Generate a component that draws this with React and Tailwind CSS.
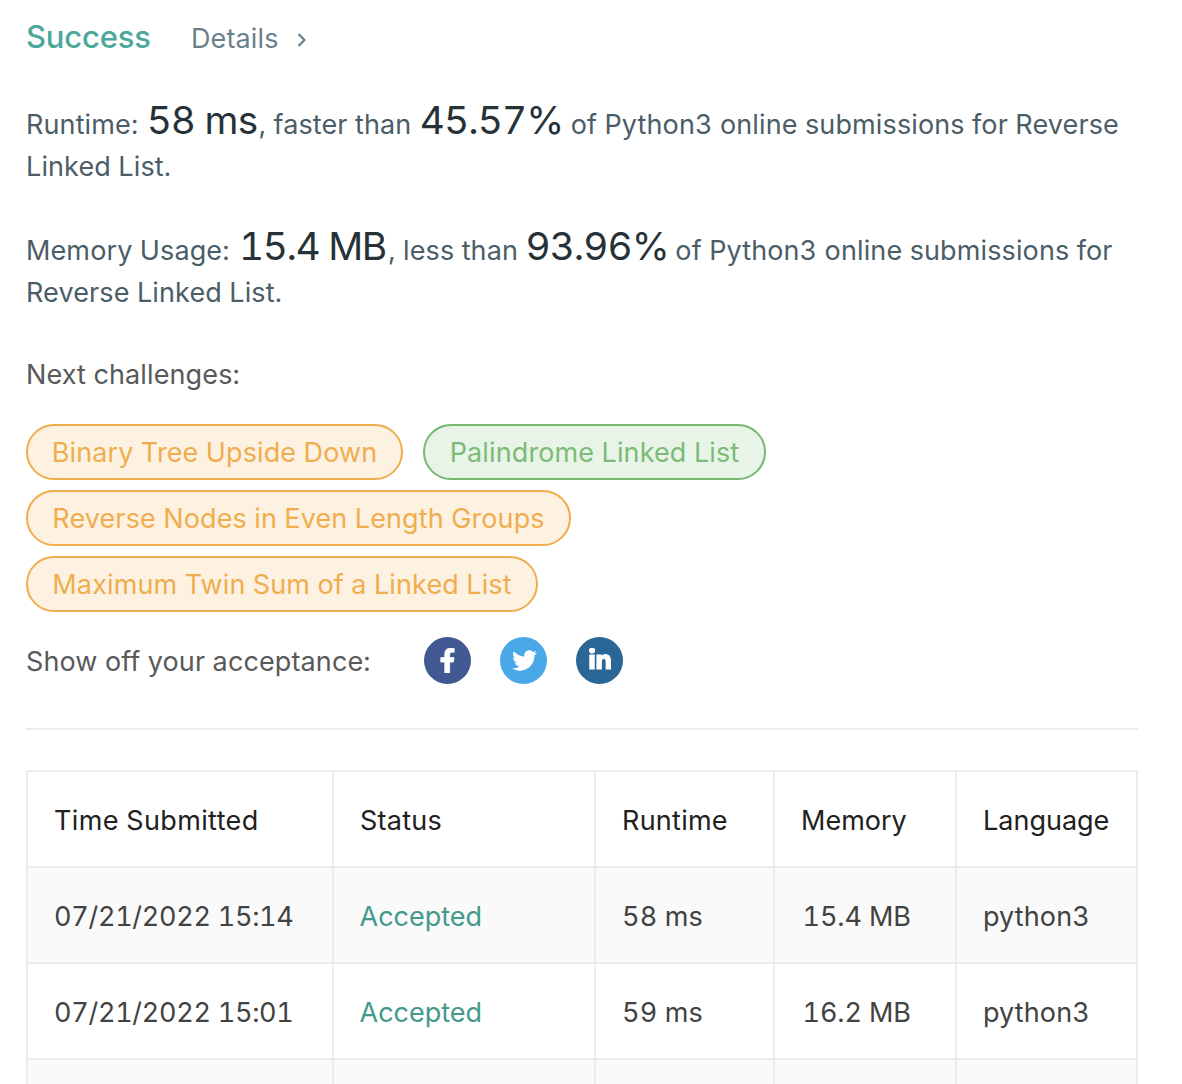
import { FaFacebookF, FaTwitter, FaLinkedinIn } from 'react-icons/fa';

const submissions = [
  { time: '07/21/2022 15:14', runtime: '58 ms', memory: '15.4 MB' },
  { time: '07/21/2022 15:01', runtime: '59 ms', memory: '16.2 MB' },
  { time: '', runtime: '', memory: '' },
];

const columns = [
  { label: 'Time Submitted', width: 'w-[306px] tracking-[0.35px]' },
  { label: 'Status', width: 'w-[262px] tracking-[0.25px]' },
  { label: 'Runtime', width: 'w-[179px] tracking-[0.25px]' },
  { label: 'Memory', width: 'w-[182px] tracking-[0px]' },
  { label: 'Language', width: 'w-[181px] tracking-[0px]' },
];

function Figure({ children, className }) {
  return (
    <span className={`text-[38.75px] leading-none text-[#263238] ${className}`}>{children}</span>
  );
}

function Challenge({ children, className }) {
  return (
    <a className={`flex h-14 items-center justify-center rounded-full border-2 pt-0.5 whitespace-nowrap ${className}`}>
      {children}
    </a>
  );
}

function Cell({ children, className = 'pl-[26px]' }) {
  return (
    <td className={`h-24 border-r-2 border-b-2 border-[#ececec] pt-1 whitespace-nowrap ${className}`}>
      {children}
    </td>
  );
}

const medium = 'border-[#f0ad4e] bg-[#fdf2e2] text-[#f0ad4e]';
const easy = 'border-[#77b971] bg-[#e9f4e9] text-[#7cbb76]';

export default function App() {
  return (
    <main className="h-[1084px] overflow-hidden bg-white pr-11 pl-[26px] font-['Inter',sans-serif] text-[27px] leading-[42px] tracking-[0.12px] text-[#546e7a] tabular-nums">
      <header className="flex items-baseline pt-4">
        <h1 className="w-[165px] text-[31px] font-medium tracking-[-0.2px] text-[#4da79b]">Success</h1>
        <a className="flex items-center text-[#6b7f8b]">
          Details
          <svg className="mt-0.5 ml-[18.5px]" width="9" height="14" viewBox="0 0 9 14" fill="none" stroke="currentColor" strokeWidth="2.2">
            <path d="M1.5 1 7.5 7 1.5 13" />
          </svg>
        </a>
      </header>

      <section className="pt-[41px] text-[#4b5d67]">
        <p className="h-[84px] whitespace-nowrap">
          Runtime: <Figure className="mr-[1.5px] ml-px tracking-[-0.9px]">58 ms</Figure>, faster than{' '}
          <Figure className="ml-px tracking-[-0.9px]">45.57%</Figure> of Python3 online submissions for Reverse
          <br />
          Linked List.
        </p>
        <p className="mt-[42px] h-[84px] whitespace-nowrap">
          Memory Usage: <Figure className="mr-[2.5px] ml-0.5 tracking-[-1.4px]">15.4 MB</Figure>, less than{' '}
          <Figure className="-mr-px tracking-[-0.9px]">93.96%</Figure> of Python3 online submissions for
          <br />
          Reverse Linked List.
        </p>
      </section>

      <section className="pt-[43px] text-[#595959]">
        <h2>Next challenges:</h2>
        <div className="mt-7 flex flex-col gap-2.5">
          <div className="flex gap-5">
            <Challenge className={`w-[377px] ${medium}`}>Binary Tree Upside Down</Challenge>
            <Challenge className={`w-[343px] ${easy}`}>Palindrome Linked List</Challenge>
          </div>
          <Challenge className={`w-[545px] ${medium}`}>Reverse Nodes in Even Length Groups</Challenge>
          <Challenge className={`w-[512px] ${medium}`}>Maximum Twin Sum of a Linked List</Challenge>
        </div>
      </section>

      <section className="mt-[25px] flex h-[47px] items-center text-[#595959]">
        <span className="w-[398.4px] pt-0.5">Show off your acceptance:</span>
        <div className="-mt-px flex gap-[29px] text-white">
          <a className="flex size-[47px] items-center justify-center rounded-full bg-[#425893]">
            <FaFacebookF size={25} className="mr-px stroke-white stroke-[16px]" />
          </a>
          <a className="flex size-[47px] items-center justify-center rounded-full bg-[#4ba8e8]">
            <FaTwitter size={25} className="mt-px ml-px" />
          </a>
          <a className="flex size-[47px] items-center justify-center rounded-full bg-[#2a6796]">
            <FaLinkedinIn size={24} className="mb-px stroke-white stroke-[22px]" />
          </a>
        </div>
      </section>

      <hr className="mt-11 border-t-2 border-[#ececec]" />

      <table className="mt-10 w-[1112px] table-fixed border-separate border-spacing-0 border-t-2 border-l-2 border-[#ececec] text-[#424242]">
        <thead>
          <tr className="text-[#212121]">
            {columns.map((c) => (
              <th key={c.label} className={`h-24 border-r-2 border-b-2 border-[#ececec] pt-1 pl-[26px] text-left font-normal whitespace-nowrap ${c.width}`}>
                {c.label}
              </th>
            ))}
          </tr>
        </thead>
        <tbody>
          {submissions.map((s, i) => (
            <tr key={i} className="odd:bg-[#fafafa]">
              <Cell className="pl-[26px] tracking-[-0.28px]">{s.time}</Cell>
              <Cell className="pl-[25.5px] tracking-[0px] text-[#43998c]">{s.time && 'Accepted'}</Cell>
              <Cell>{s.runtime}</Cell>
              <Cell className="pl-[27.5px] tracking-[-0.1px]">{s.memory}</Cell>
              <Cell>{s.time && 'python3'}</Cell>
            </tr>
          ))}
        </tbody>
      </table>
    </main>
  );
}
